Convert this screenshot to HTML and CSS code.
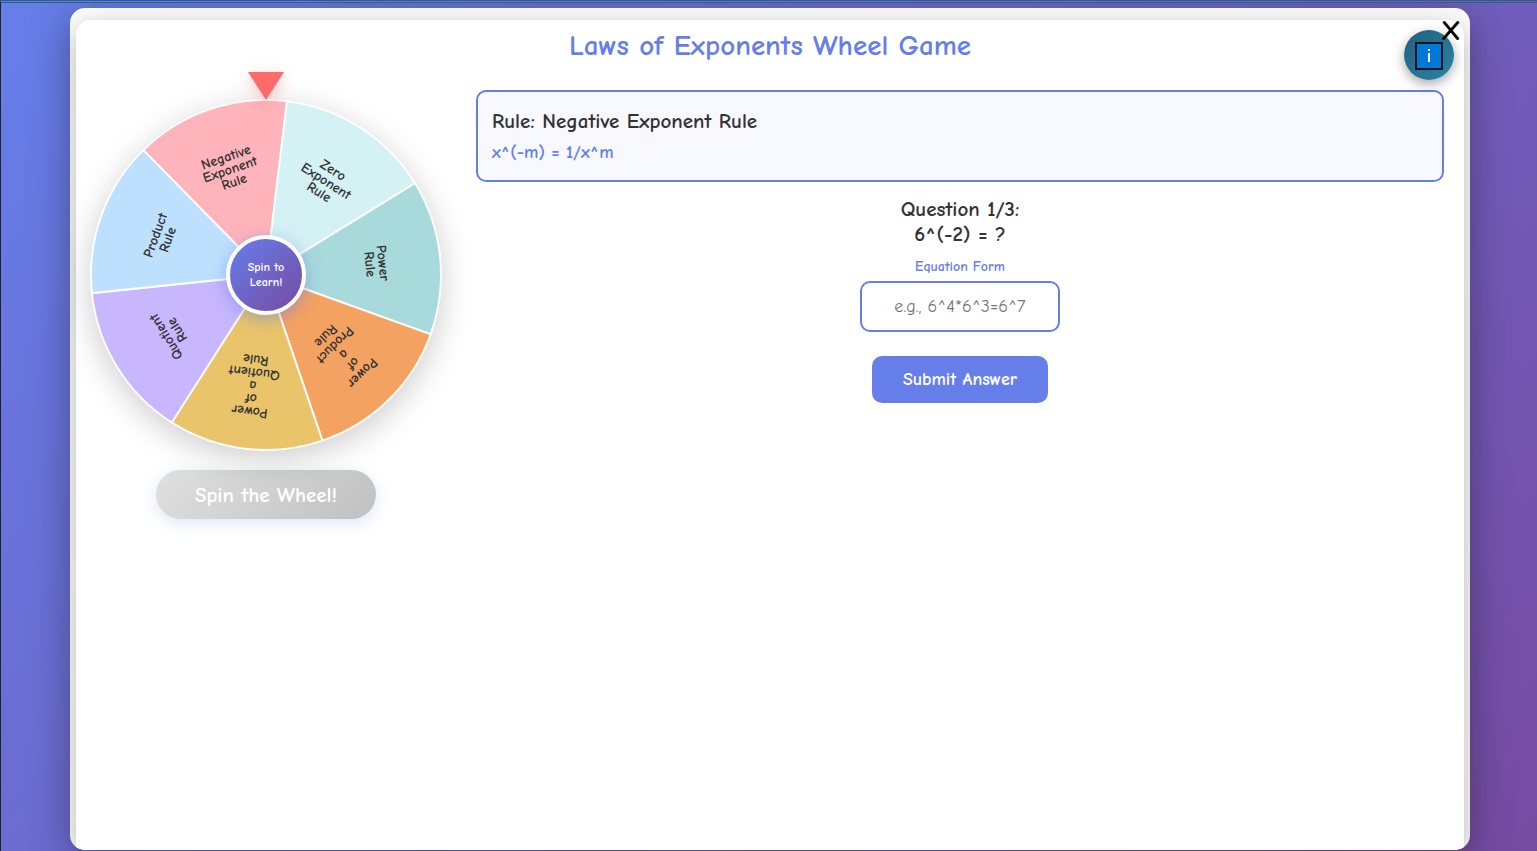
FILE: index.html
```
<!DOCTYPE html>
<html lang="en">
	<head>
		<meta charset="UTF-8">
		<title>Laws of Exponents Wheel Game</title>
		<link rel="stylesheet" href="styles.css">
	</head>
	<body>
		<div class="modal">
			<button class="info-btn" type="button" aria-label="Instructions">
				<svg width="28" height="28" viewBox="0 0 28 28">
					<rect x="1" y="1" width="26" height="26" fill="#0078d7" stroke="#06141c" stroke-width="2"/>
					<path d="M14 11V20M14 7V9" stroke="#fff" stroke-width="2"/>
				</svg>
			</button>
			<button class="close-btn" type="button" aria-label="Close">X</button>
			<div class="game">
				<h1 class="title">Laws of Exponents Wheel Game</h1>
				<div class="main">
					<div class="wheel-side">
						<div class="wheel-box">
							<svg class="wheel" viewBox="-176 -176 352 352">
								<defs>
									<path id="slice" d="M0 0L-75.93 -157.67A175 175 0 0 1 75.93 -157.67Z"/>
								</defs>
								<g transform="rotate(-18.8)">
									<use href="#slice" fill="#ffb3ba"/>
									<text y="-120">Negative</text>
									<text y="-107">Exponent</text>
									<text y="-94">Rule</text>
								</g>
								<g transform="rotate(32.6)">
									<use href="#slice" fill="#d4f1f4"/>
									<text y="-120">Zero</text>
									<text y="-107">Exponent</text>
									<text y="-94">Rule</text>
								</g>
								<g transform="rotate(84.1)">
									<use href="#slice" fill="#a8dadc"/>
									<text y="-113">Power</text>
									<text y="-100">Rule</text>
								</g>
								<g transform="rotate(135.5)">
									<use href="#slice" fill="#f4a261"/>
									<text y="-133">Power</text>
									<text y="-120">of</text>
									<text y="-107">a</text>
									<text y="-94">Product</text>
									<text y="-81">Rule</text>
								</g>
								<g transform="rotate(186.9)">
									<use href="#slice" fill="#e9c46a"/>
									<text y="-133">Power</text>
									<text y="-120">of</text>
									<text y="-107">a</text>
									<text y="-94">Quotient</text>
									<text y="-81">Rule</text>
								</g>
								<g transform="rotate(238.3)">
									<use href="#slice" fill="#c8b6ff"/>
									<text y="-113">Quotient</text>
									<text y="-100">Rule</text>
								</g>
								<g transform="rotate(289.8)">
									<use href="#slice" fill="#bde0fe"/>
									<text y="-113">Product</text>
									<text y="-100">Rule</text>
								</g>
							</svg>
							<svg class="pointer" width="36" height="28" viewBox="0 0 36 28">
								<path d="M0 0H36L18 28Z" fill="#ff6b6b"/>
							</svg>
							<div class="hub">Spin to<br>Learn!</div>
						</div>
						<button class="spin-btn" type="button" disabled>Spin the Wheel!</button>
					</div>
					<div class="question-side">
						<div class="rule">
							<h2 class="rule-name">Rule: Negative Exponent Rule</h2>
							<p class="formula">x^(-m) = 1/x^m</p>
						</div>
						<form class="question">
							<p class="question-text">Question 1/3:<br>6^(-2) = ?</p>
							<label class="answer-label" for="answer">Equation Form</label>
							<input class="answer" id="answer" type="text" placeholder="e.g., 6^4*6^3=6^7">
							<button class="submit-btn" type="button">Submit Answer</button>
						</form>
					</div>
				</div>
			</div>
		</div>
	</body>
</html>
```
FILE: styles.css
```
*{
	margin: 0;
	padding: 0;
	box-sizing: border-box;
}
body{
	display: flex;
	flex-direction: column;
	align-items: center;
	height: 100vh;
	padding: 5px 0 1px 2px;
	overflow: hidden;
	border-top: 3px double #2d6080;
	border-left: 1px solid #222;
	background: linear-gradient(135deg, #667eea 0%, #764ba2 100%);
	font-family: "Comic Sans MS", "Comic Neue", "Open Sans", sans-serif;
	color: #333;
}
button,input{
	font-family: inherit;
}
.modal{
	position: relative;
	display: flex;
	flex: 1;
	width: calc(100% - 134px);
	max-width: 1400px;
	padding: 12px 6px 0;
	border-radius: 15px;
	overflow: hidden;
	background: #fff;
	box-shadow: 0 10px 40px rgba(0,0,0,0.35);
}
.game{
	flex: 1;
	padding-top: 6px;
	border-radius: 15px 15px 0 0;
	background: #fff;
	box-shadow: 0 8px 32px rgba(0,0,0,0.3);
}
.title{
	color: #667eea;
	font-size: 29px;
	font-weight: bold;
	line-height: 40px;
	text-align: center;
}
.main{
	display: flex;
	gap: 20px;
	padding: 6px 20px 0 0;
}
.wheel-side{
	display: flex;
	flex-direction: column;
	align-items: center;
	width: 380px;
	gap: 19px;
}
.wheel-box{
	position: relative;
	width: 352px;
	padding-top: 27px;
}
.wheel{
	display: block;
	width: 352px;
	height: 352px;
	border-radius: 50%;
	box-shadow: 0 8px 32px rgba(0,0,0,0.2);
}
.wheel use{
	stroke: #fff;
	stroke-width: 2px;
	stroke-opacity: 0.9;
}
.wheel text{
	fill: #333;
	font-size: 14px;
	font-weight: bold;
	text-anchor: middle;
}
.pointer{
	position: absolute;
	top: 0;
	left: 50%;
	transform: translateX(-50%);
	overflow: visible;
	filter: drop-shadow(0 4px 8px rgba(255,107,107,0.4));
}
.hub{
	position: absolute;
	top: 163px;
	left: 50%;
	display: flex;
	align-items: center;
	justify-content: center;
	width: 80px;
	height: 80px;
	transform: translateX(-50%);
	border: 4px solid #fff;
	border-radius: 50%;
	background: linear-gradient(135deg, #667eea, #764ba2);
	box-shadow: 0 4px 16px rgba(102,126,234,0.5);
	color: #fff;
	font-size: 12px;
	font-weight: bold;
	line-height: 15px;
	text-align: center;
}
.spin-btn{
	width: 220px;
	height: 49px;
	border: 0;
	border-radius: 25px;
	background: linear-gradient(135deg, #e0e0e0, #c0c0c0);
	box-shadow: 0 4px 16px rgba(102,126,234,0.2);
	color: #fff;
	font-size: 21px;
	font-weight: bold;
}
.question-side{
	flex: 1;
	padding-top: 18px;
}
.rule{
	padding: 14px;
	border: 2px solid #667eea;
	border-radius: 10px;
	background: #f8f9ff;
}
.rule-name{
	font-size: 21px;
	font-weight: bold;
	line-height: 30px;
}
.formula{
	margin-top: 4px;
	color: #667eea;
	font-size: 18px;
	font-weight: bold;
	line-height: 26px;
}
.question{
	display: flex;
	flex-direction: column;
	align-items: center;
	padding-top: 15px;
}
.question-text{
	font-size: 21px;
	font-weight: bold;
	line-height: 25px;
	text-align: center;
}
.answer-label{
	margin: 10px 0 4px;
	color: #667eea;
	font-size: 14px;
	font-weight: bold;
	line-height: 20px;
}
.answer{
	width: 200px;
	height: 51px;
	border: 2px solid #667eea;
	border-radius: 10px;
	background: #fff;
	font-size: 18px;
	text-align: center;
}
.answer::placeholder{
	color: #757575;
}
.submit-btn{
	width: 176px;
	height: 47px;
	margin-top: 24px;
	border: 0;
	border-radius: 10px;
	background: #667eea;
	color: #fff;
	font-size: 18px;
	font-weight: bold;
}
.info-btn{
	position: absolute;
	top: 22px;
	right: 16px;
	display: flex;
	align-items: center;
	justify-content: center;
	width: 50px;
	height: 50px;
	padding-top: 2px;
	border: 0;
	border-radius: 50%;
	background: linear-gradient(135deg, #235f7f, #2a83a2);
	box-shadow: 0 4px 12px rgba(0,0,0,0.35);
}
.close-btn{
	position: absolute;
	top: 8px;
	right: 8px;
	width: 22px;
	height: 30px;
	border: 0;
	background: none;
	color: #000;
	font-size: 29px;
	font-weight: bold;
	line-height: 30px;
}
```
